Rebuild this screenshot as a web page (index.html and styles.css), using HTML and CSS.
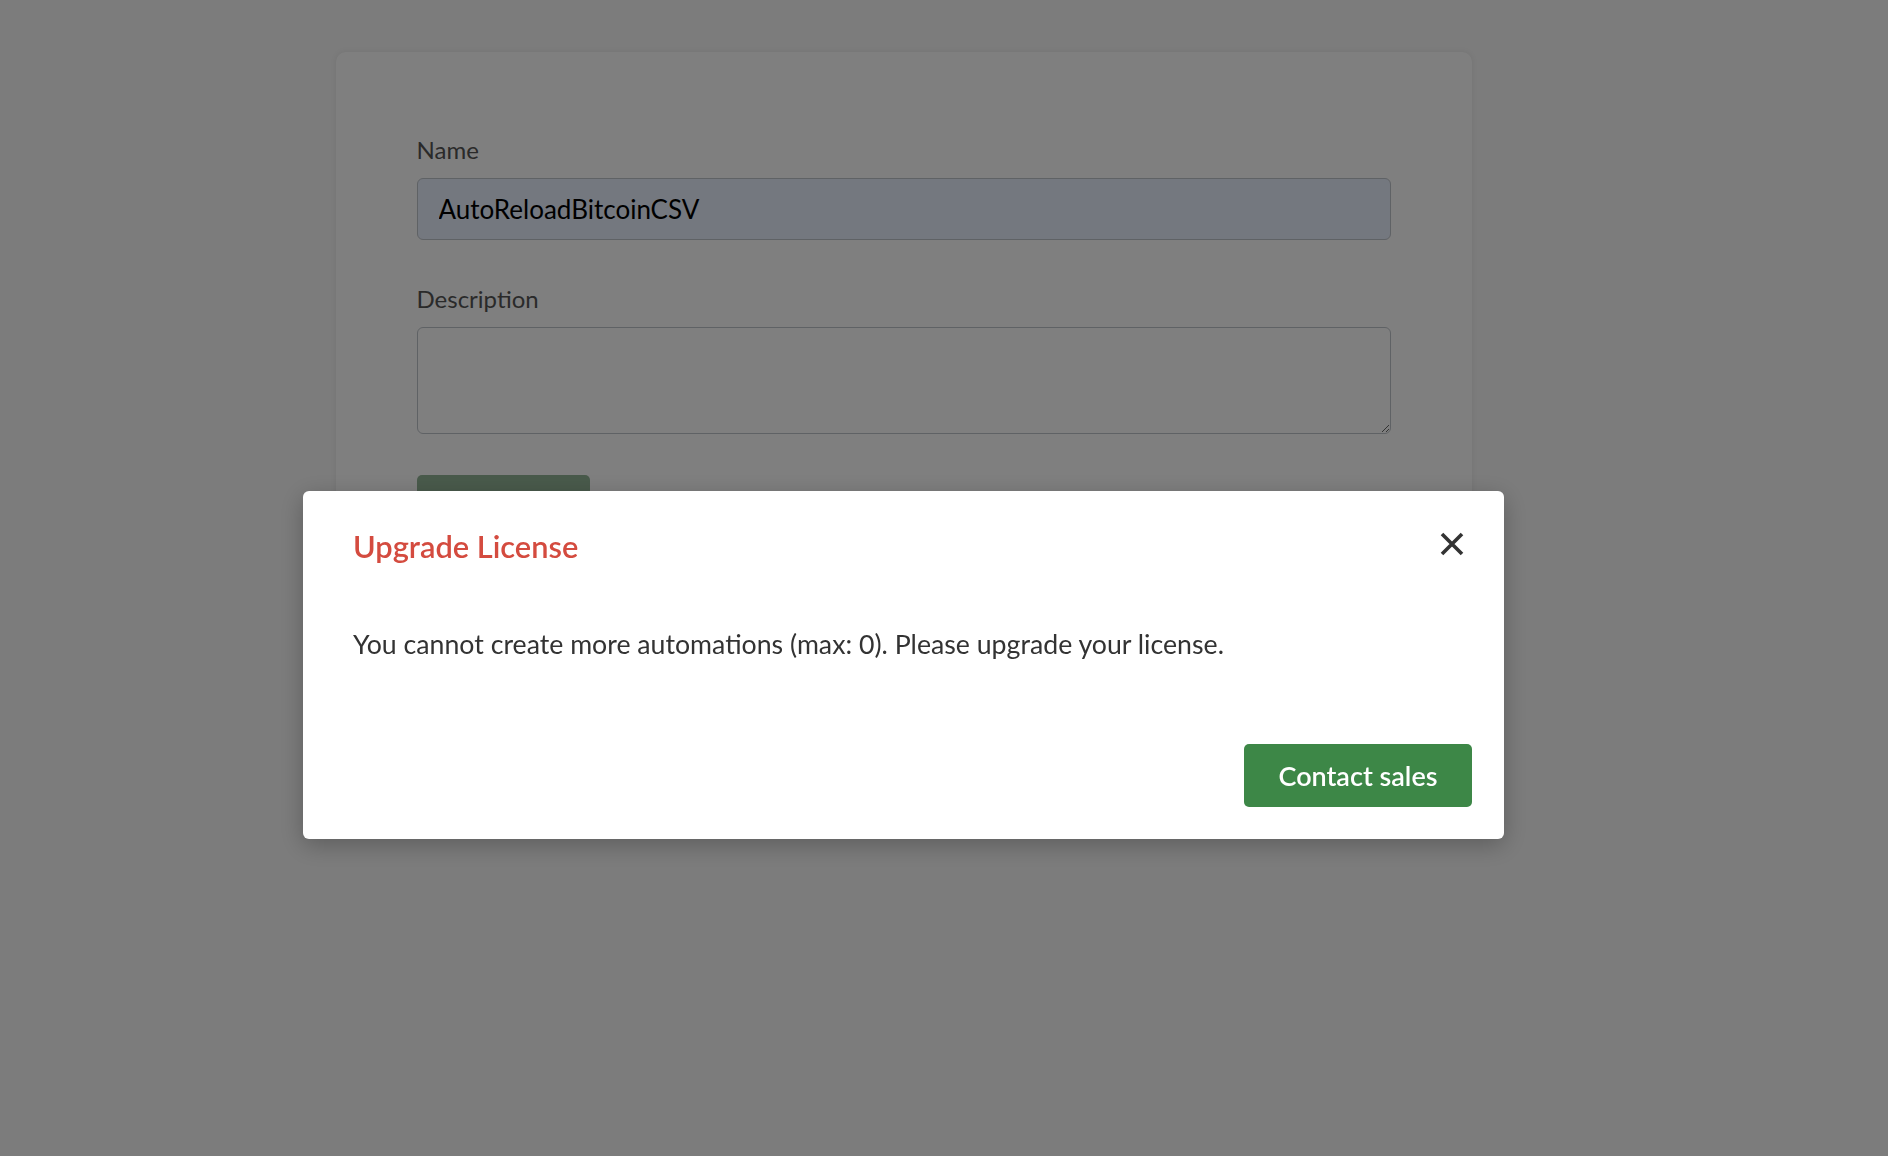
FILE: index.html
```html
<!DOCTYPE html>
<html lang="en">
<head>
<meta charset="utf-8">
<title>Automation</title>
<link rel="stylesheet" href="styles.css">
</head>
<body>
<main class="page">
  <section class="card">
    <div class="field">
      <label class="label" for="name">Name</label>
      <input class="input input-filled" id="name" type="text" value="AutoReloadBitcoinCSV">
    </div>
    <div class="field">
      <label class="label" for="desc">Description</label>
      <textarea class="input textarea" id="desc"></textarea>
    </div>
    <button class="btn btn-save" type="button">Save</button>
  </section>
</main>

<div class="overlay">
  <div class="modal" role="dialog" aria-labelledby="modal-title">
    <div class="modal-header">
      <h5 class="modal-title" id="modal-title">Upgrade License</h5>
      <button class="close" type="button" aria-label="Close">
        <svg width="24" height="24" viewBox="0 0 24 24" aria-hidden="true">
          <path d="M2 2 L22 22 M22 2 L2 22" stroke="#333" stroke-width="3.6" fill="none"/>
        </svg>
      </button>
    </div>
    <div class="modal-body">You cannot create more automations (max: 0). Please upgrade your license.</div>
    <div class="modal-footer">
      <button class="btn btn-contact" type="button">Contact sales</button>
    </div>
  </div>
</div>
</body>
</html>
```
FILE: styles.css
```css
* { box-sizing: border-box; }

html, body {
  margin: 0;
  padding: 0;
}

body {
  background: #f8f8f8;
  font-family: Lato, "Liberation Sans", sans-serif;
  color: #333;
  width: 1888px;
  height: 1156px;
  overflow: hidden;
}

.page {
  width: 1807px;
  padding-top: 52px;
}

.card {
  width: 1136px;
  margin: 0 auto;
  background: #fff;
  border-radius: 10px;
  box-shadow: 0 0 6px rgba(0, 0, 0, 0.08);
  padding: 80px 81px 80px;
}

.field {
  display: flex;
  flex-direction: column;
  margin-bottom: 41px;
}

.label {
  font-size: 24px;
  line-height: 36px;
  color: #555;
  margin-bottom: 10px;
}

.input {
  width: 100%;
  border: 1px solid #bfc4ca;
  border-radius: 6px;
  background: #fff;
  font-family: Lato, "Liberation Sans", sans-serif;
  color: #000;
}

.input-filled {
  height: 62px;
  padding: 0 21px;
  font-size: 26px;
  background: #e8f0fe;
}

.textarea {
  height: 107px;
  padding: 12px 21px;
  font-size: 24px;
  resize: vertical;
}

.btn {
  border: none;
  border-radius: 5px;
  font-family: Lato, "Liberation Sans", sans-serif;
  font-weight: 600;
  color: #fff;
  cursor: pointer;
}

.btn-save {
  width: 173px;
  height: 62px;
  font-size: 26px;
  background: #93b597;
}

.overlay {
  position: fixed;
  inset: 0;
  background: rgba(0, 0, 0, 0.5);
  display: flex;
  justify-content: center;
  align-items: flex-start;
  padding: 491px 81px 0 0;
}

.modal {
  width: 1201px;
  background: #fff;
  border-radius: 6px;
  box-shadow: 0 6px 24px rgba(0, 0, 0, 0.25);
  padding: 38px 40px 32px 50px;
  display: flex;
  flex-direction: column;
}

.modal-header {
  display: flex;
  justify-content: space-between;
  align-items: center;
  height: 36px;
}

.modal-title {
  margin: 0;
  font-size: 30.8px;
  line-height: 36px;
  font-weight: 600;
  color: #d44b3f;
}

.close {
  border: none;
  background: none;
  padding: 0;
  width: 24px;
  height: 24px;
  margin-bottom: 7px;
  display: flex;
  cursor: pointer;
}

.modal-body {
  margin-top: 61px;
  font-size: 26.7px;
  line-height: 36px;
  color: #333;
}

.modal-footer {
  display: flex;
  justify-content: flex-end;
  margin-top: 82px;
  margin-right: -8px;
}

.btn-contact {
  width: 228px;
  height: 63px;
  font-size: 27px;
  background: #3d8747;
}
```
